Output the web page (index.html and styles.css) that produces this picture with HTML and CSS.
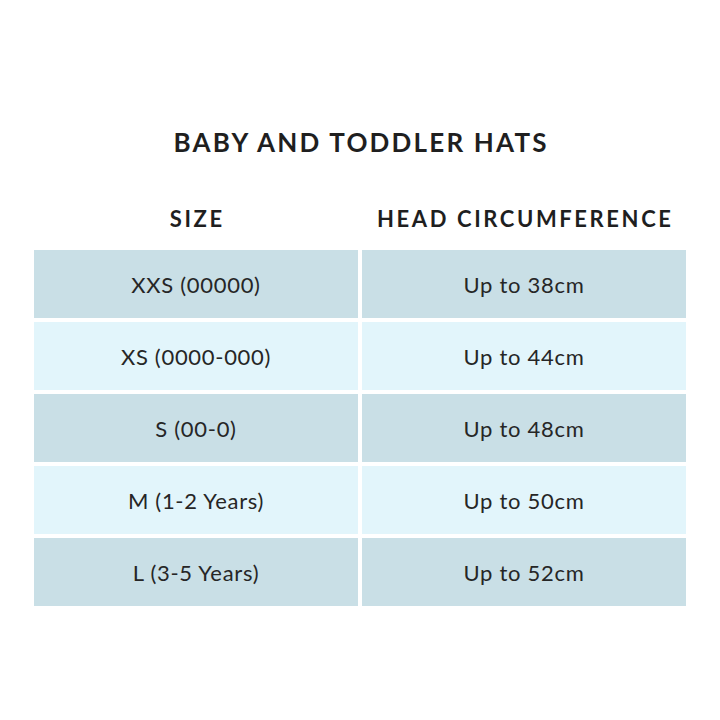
FILE: index.html
```html
<!DOCTYPE html>
<html lang="en">
<head>
<meta charset="utf-8">
<title>Baby and Toddler Hats</title>
<link rel="stylesheet" href="styles.css">
</head>
<body>
<main class="chart">
  <h1 class="title">BABY AND TODDLER HATS</h1>
  <div class="table">
    <div class="head">SIZE</div>
    <div class="head">HEAD CIRCUMFERENCE</div>
    <div class="cell dark">XXS (00000)</div>
    <div class="cell dark">Up to 38cm</div>
    <div class="cell light">XS (0000-000)</div>
    <div class="cell light">Up to 44cm</div>
    <div class="cell dark">S (00-0)</div>
    <div class="cell dark">Up to 48cm</div>
    <div class="cell light">M (1-2 Years)</div>
    <div class="cell light">Up to 50cm</div>
    <div class="cell dark">L (3-5 Years)</div>
    <div class="cell dark">Up to 52cm</div>
  </div>
</main>
</body>
</html>
```

FILE: styles.css
```css
html, body {
  margin: 0;
  padding: 0;
  background: #ffffff;
}

body {
  width: 720px;
  height: 720px;
  font-family: "Lato", "Noto Sans", sans-serif;
  color: #232323;
}

.chart {
  padding-top: 129px;
  display: flex;
  flex-direction: column;
  align-items: center;
}

.title {
  margin: 0;
  font-size: 26px;
  line-height: 26px;
  font-weight: 700;
  letter-spacing: 2.2px;
  padding-left: 2.2px;
  color: #1f1f1f;
}

.table {
  margin-top: 53px;
  display: grid;
  grid-template-columns: 324px 324px;
  column-gap: 4px;
  row-gap: 4px;
}

.head {
  font-size: 22px;
  line-height: 22px;
  font-weight: 700;
  letter-spacing: 2.6px;
  padding-left: 2.6px;
  text-align: center;
  color: #1f1f1f;
  margin-bottom: 16px;
}

.cell {
  height: 68px;
  display: flex;
  align-items: center;
  justify-content: center;
  font-size: 22px;
  letter-spacing: 0.7px;
  color: #262626;
}

.dark {
  background: #c9dfe6;
}

.light {
  background: #e2f5fb;
}
```
